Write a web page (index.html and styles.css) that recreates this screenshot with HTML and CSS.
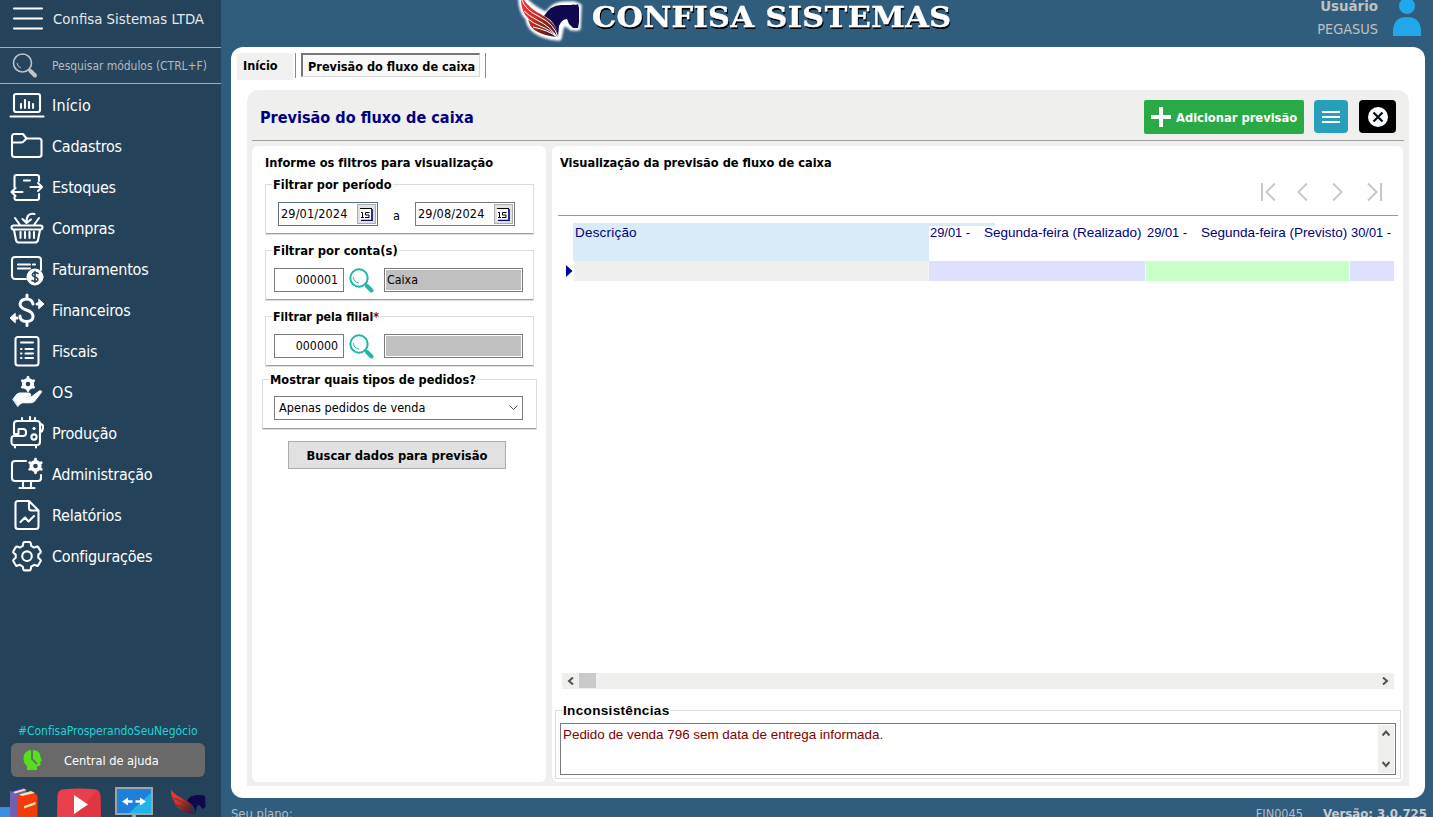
FILE: index.html
```html
<!DOCTYPE html>
<html lang="pt-BR">
<head>
<meta charset="utf-8">
<title>Confisa Sistemas</title>
<link rel="stylesheet" href="styles.css">
</head>
<body>
<div class="app">
  <aside class="sidebar">
    <div class="company">
      <svg class="burger" width="30" height="24" viewBox="0 0 30 24"><path d="M1 1.500h28M1 11.500h28M1 21.500h28"/></svg>
      <span class="company-name">Confisa Sistemas LTDA</span>
    </div>
    <div class="search">
      <svg width="26" height="26" viewBox="0 0 26 26"><circle cx="10.500" cy="10" r="9" fill="none" stroke="#bfc4c8" stroke-width="1.600"/><path d="M5 10a6 6 0 0 0 4 5" fill="none" stroke="#bfc4c8"/><path d="M16.500 16l2 2" stroke="#bfc4c8" stroke-width="2"/><path d="M18.500 18l4.500 4.500" stroke="#bfc4c8" stroke-width="4" stroke-linecap="round"/></svg>
      <span class="search-hint">Pesquisar módulos (CTRL+F)</span>
    </div>
    <nav class="menu">
      <a class="item"><svg class="ico" viewBox="0 0 36 36"><rect x="5" y="7" width="26" height="18" rx="2"/><path d="M1.500 29.500h33M12 21v-4M16 21v-8M20 21v-6M24 21v-4"/></svg><span>Início</span></a>
      <a class="item"><svg class="ico" viewBox="0 0 36 36"><path d="M3 26V8.500A2.500 2.500 0 0 1 5.500 6H14l3.500 4.500H30A2.500 2.500 0 0 1 32.500 13v13.500A2.500 2.500 0 0 1 30 29H5.500A2.500 2.500 0 0 1 3 26.500zM3 14.500h9.500q1.500 0 2.500-1.500l2.500-2.500"/></svg><span>Cadastros</span></a>
      <a class="item"><svg class="ico" viewBox="0 0 36 36"><path d="M5.500 18V8a2 2 0 0 1 2-2H28a2 2 0 0 1 2 2v4M30 25v4a2 2 0 0 1-2 2H7.500a2 2 0 0 1-2-2v-1M15 11.500h6M21.500 18H33M29 14l4 4-4 4M13.500 23H2.500M6.500 19l-4 4 4 4"/></svg><span>Estoques</span></a>
      <a class="item"><svg class="ico" viewBox="0 0 36 36"><path d="M4.500 15.500h27a1.500 1.500 0 0 1 0 4H4.500a1.500 1.500 0 0 1 0-4zM5 20l2 10q.5 2.500 3 2.500h16q2.500 0 3-2.500l2-10M11.500 22v6M16 22v6M20.500 22v6M25 22v6M6 8l5 7M30 8l-5 7M25.500 4q-8-1.500-8 8M13.500 9l4 4 4.500-3.500"/></svg><span>Compras</span></a>
      <a class="item"><svg class="ico" viewBox="0 0 36 36"><path d="M17 28H6a3 3 0 0 1-3-3V9a3 3 0 0 1 3-3h23a3 3 0 0 1 3 3v10M9 13.500h12M24 13.500h2M9 17.500h12"/><circle class="solid" cx="26" cy="26" r="8"/><path class="dark" d="M29 22.500q-3-2-5 0t2 3.500 2.500 3.500-5.500 0M26 20.500v11"/></svg><span>Faturamentos</span></a>
      <a class="item"><svg class="ico" viewBox="0 0 36 36"><path class="thick" d="M24 12q-1-5-6.500-5T11 12q0 4 6.500 6t6.500 6.500q0 5-6.500 5T11 24M18 3v4M18 29.500v4"/><path class="thick" d="M28 12h3"/><path class="solid" d="M30 7.500l5 4.500-5 4.500z"/><path class="thick" d="M5 26h3"/><path class="solid" d="M6 21.500L1 26l5 4.500z"/></svg><span>Financeiros</span></a>
      <a class="item"><svg class="ico" viewBox="0 0 36 36"><rect x="6.500" y="4" width="23" height="28.500" rx="2.500"/><path d="M12 9.500h12M12 16h.5M16.500 16H24M12 20.500h.5M16.500 20.500H24M12 25h.5M16.500 25H24"/></svg><span>Fiscais</span></a>
      <a class="item"><svg class="ico" viewBox="0 0 36 36"><g transform="translate(19 10)"><circle r="4.200" class="ring"/><path class="teeth" d="M0-5V-6.500M0 5V6.500M4.300-2.500L5.600-3.200M4.300 2.500L5.600 3.200M-4.300-2.500L-5.600-3.200M-4.300 2.500L-5.600 3.200"/></g><path class="solid" d="M4 25l4-5q2-1.500 5-1h7q2.500.5 1.500 3l-6 .8q6 1.500 9-1.500l6-4.500q2.500-.5 2 1.500l-7 9q-1.500 1.500-4 1.500h-8q-2 0-4.500 3.500z"/></svg><span>OS</span></a>
      <a class="item"><svg class="ico" viewBox="0 0 36 36"><path d="M5 19V9q0-3 3-3h20q3 0 3 3v18q0 3-3 3H5q-2.500 0-2.500-3v-3q0-3 2.500-3h9q3 0 3-3v-1q0-3-3-3H9.500v5H5M13 6V3M21 6V2M26 6V3M31 9q3.500 0 3 4t-3 4M6 31v1.500M27 31v1.500"/><circle cx="25" cy="22" r="2.600"/><circle class="solid" cx="25" cy="13.500" r="1.200"/></svg><span>Produção</span></a>
      <a class="item"><svg class="ico" viewBox="0 0 36 36"><path d="M17 5H6Q3 5 3 8v14q0 3 3 3h23q3 0 3-3v-3M14 25v6M22 25v6M10.500 32h15"/><g transform="translate(26.500 10)"><circle r="4.200" class="ring"/><path class="teeth" d="M0-5V-6.800M0 5V6.800M4.300-2.500L5.800-3.400M4.300 2.500L5.800 3.400M-4.300-2.500L-5.800-3.400M-4.300 2.500L-5.800 3.400"/></g></svg><span>Administração</span></a>
      <a class="item"><svg class="ico" viewBox="0 0 36 36"><path d="M20 4H9Q6.500 4 6.500 6.500v23Q6.500 32 9 32h18q2.500 0 2.500-2.500V13.500zM20 4v7q0 2.500 2.500 2.500h7M11.500 25l4.500-4.500 3.500 4 5.500-5.500"/></svg><span>Relatórios</span></a>
      <a class="item"><svg class="ico" viewBox="0 0 36 36"><path d="M15.300 4h5.400q.8 0 1 1l.5 2.800 3 1.800 2.800-1q.8-.3 1.200.5l2.500 4.300q.4.800-.2 1.300L29.300 16.600v3.200l2.200 1.900q.6.500.2 1.300l-2.500 4.300q-.4.800-1.200.5l-2.800-1-3 1.800-.5 2.800q-.2 1-1 1h-5.400q-.8 0-1-1l-.5-2.800-3-1.800-2.800 1q-.8.300-1.200-.5L4.300 23q-.4-.8.200-1.300l2.200-1.900v-3.200L4.500 14.700q-.6-.5-.2-1.300l2.500-4.300q.4-.8 1.200-.5l2.800 1 3-1.800.5-2.800q.2-1 1-1z"/><circle cx="18" cy="18.200" r="4.800"/></svg><span>Configurações</span></a>
    </nav>
    <div class="hashtag">#ConfisaProsperandoSeuNegócio</div>
    <button class="help">
      <svg width="20" height="22" viewBox="0 0 20 22"><path fill="#55e01c" d="M4 21v-4Q.5 14.500.5 9.500.5 1 9.500 1 17 1 17.500 8l1.500 4h-1.500v3.500q0 1.500-3.500 1.500v4z"/><path d="M9 1v9l5 5" fill="none" stroke="#696969" stroke-width="1.800"/></svg>
      <span>Central de ajuda</span>
    </button>
    <div class="shortcuts">
      <svg class="sc-books" width="38" height="31" viewBox="0 0 38 31"><path fill="#3b8be0" d="M0 20h10v11H0z"/><path fill="#7060b0" d="M10 4l14-3 2 3v27H10z"/><path fill="#203c90" d="M10 3l10-2.500h5L12 5z"/><path fill="#f4e3b0" d="M13 5l11-3 3 1-12 3.500z"/><path fill="#f53b0c" d="M17 8.500L32 4.500l5.500 4V31H17z"/><path fill="#f4e3b0" d="M19 7.500l12-3.500 4 2-13 3zM24 19l11.500-4v2.500L24 21.500z"/></svg>
      <svg class="sc-video" width="44" height="29" viewBox="0 0 44 29"><path fill="#e8404e" d="M5 1.500Q22-.5 39 1.500q4 1 4.500 6L44 29H0L.5 7.500Q1 2.500 5 1.500z"/><path fill="#d62838" d="M40 2q3 1 3.500 6L44 29H16z" opacity=".45"/><path fill="#fff" d="M17 7v19l14-9.500z"/></svg>
      <svg class="sc-remote" width="38" height="30" viewBox="0 0 38 30"><path fill="#9ca3aa" d="M0 0h38v28H0zM17 27h4v3h-4z"/><path fill="#1f80dc" d="M2 2h34v24H2z"/><path fill="#1fb5e8" d="M36 6v20H14z"/><path fill="#fff" d="M7 14.500l6-4v2.800h4.500v2.400H13v2.800zM31 14.500l-6-4v2.800h-4.500v2.400H25v2.800z"/></svg>
      <svg class="sc-horse" width="35" height="25" viewBox="0 0 35 25"><path fill="url(#wing)" d="M0 0q0 7 3 11 2 6 7 9 5 3 14 4Q23 14 13 9 4 5 0 0z"/><path fill="#10084e" d="M16 11q2-6 11-6 6 0 7 1l.5 11-3 2-3-4q-4 0-3.500 9-1-9-9-13z"/><path d="M2 8q16 5 21 16M5 15q12 3 17 8M2 2q16 8 22 21" fill="none" stroke="#24425a" stroke-width=".8"/></svg>
    </div>
  </aside>

  <div class="main">
    <header class="topbar">
      <div class="brand">
        <svg class="brand-logo" width="71" height="46" viewBox="0 0 71 46">
          <defs>
            <linearGradient id="wing" x1="0" y1="0" x2="1" y2="1"><stop offset="0" stop-color="#f8383c"/><stop offset=".4" stop-color="#d83028"/><stop offset=".65" stop-color="#8c2818"/><stop offset="1" stop-color="#350a40"/></linearGradient>
            <filter id="halo" x="-20%" y="-20%" width="140%" height="140%"><feGaussianBlur stdDeviation="1.300"/></filter>
          </defs>
          <g filter="url(#halo)" fill="#fff" stroke="#fff" stroke-width="5.500" stroke-linejoin="round"><path d="M7-6q-1 17 7 24 1 9 8 13 8 6 23 7l2-10 3-6 8 6h6l1-22-5-2H52q-13 0-19 11Q14 7 7-6z"/></g>
          <path fill="url(#wing)" d="M7-6q-1 17 7 24 1 9 8 13 8 5 22 6Q43 23 28 15 12 7 7-6z"/>
          <path fill="#10084e" d="M30 16Q37 4 49 5h8q3-1 5 0l2-1 1 4v14l-1 6h-5l-4-4-2-5q-5 0-8 7l-1 11Q42 21 30 16z"/>
          <path d="M8 0q3 10 18 17 14 7 18 20M10 11q5 5 13 9 14 7 20 17M14 19q5 4 12 7 11 4 17 11M19 27q15 3 24 10" fill="none" stroke="#fff" stroke-width="1"/>
        </svg>
        <h1 class="brand-name">CONFISA SISTEMAS</h1>
      </div>
      <div class="user">
        <div class="user-text"><b>Usuário</b><span>PEGASUS</span></div>
        <svg width="28" height="40" viewBox="0 0 28 40"><circle cx="14" cy="9" r="8" fill="#22a8ea"/><path fill="#22a8ea" d="M0 39V33q1-13 14-13t14 13v6z"/></svg>
      </div>
    </header>

    <section class="window">
      <div class="tabs">
        <span class="tab"><b>Início</b></span>
        <i class="tab-rule"></i>
        <span class="tab active"><b>Previsão do fluxo de caixa</b></span>
        <i class="tab-rule end"></i>
      </div>

      <div class="sheet">
        <div class="sheet-head">
          <h2 class="sheet-title">Previsão do fluxo de caixa</h2>
          <button class="btn-add"><svg width="20" height="20" viewBox="0 0 20 20"><path d="M10 0v20M0 10h20" stroke="#fff" stroke-width="4"/></svg><b>Adicionar previsão</b></button>
          <button class="btn-menu"><svg width="18" height="12" viewBox="0 0 18 12"><path d="M0 1h18M0 6h18M0 11h18" stroke="#fff" stroke-width="2"/></svg></button>
          <button class="btn-close"><svg width="20" height="20" viewBox="0 0 20 20"><circle cx="10" cy="10" r="10" fill="#fff"/><path d="M5.500 5.500l9 9M14.500 5.500l-9 9" stroke="#000c14" stroke-width="2.200"/></svg></button>
        </div>

        <div class="cols">
          <form class="card filters">
            <h3 class="h3">Informe os filtros para visualização</h3>
            <div class="group">
              <b class="legend">Filtrar por período</b>
              <span class="date focus"><span>29/01/2024</span><i class="cal"><svg width="13" height="13" viewBox="0 0 13 13"><path fill="#fff" d="M0 1h11v11H0z"/><path d="M0 .5h12" stroke="#000"/><path d="M12 1v11.500H1" fill="none" stroke="#000080" stroke-width="1.600"/><path d="M1 4.500h1.500V9M1 9.500h3M9.500 4.500h-4V7h3.500v2.500H5" fill="none" stroke="#000"/></svg></i></span>
              <span class="to">a</span>
              <span class="date"><span>29/08/2024</span><i class="cal"><svg width="13" height="13" viewBox="0 0 13 13"><path fill="#fff" d="M0 1h11v11H0z"/><path d="M0 .5h12" stroke="#000"/><path d="M12 1v11.500H1" fill="none" stroke="#000080" stroke-width="1.600"/><path d="M1 4.500h1.500V9M1 9.500h3M9.500 4.500h-4V7h3.500v2.500H5" fill="none" stroke="#000"/></svg></i></span>
            </div>
            <div class="group lookup">
              <b class="legend wide">Filtrar por conta(s)</b>
              <span class="code">000001</span>
              <svg class="lens" width="26" height="26" viewBox="0 0 26 26"><circle cx="10" cy="10" r="8.700"/><path d="M4.500 9.500a6 6 0 0 0 5 5.500" stroke-width="1"/><path d="M16 16l2 2"/><path d="M18 18l4.500 4.500" stroke-width="4"/></svg>
              <span class="readonly">Caixa</span>
            </div>
            <div class="group lookup">
              <b class="legend tight">Filtrar pela filial<em>*</em></b>
              <span class="code">000000</span>
              <svg class="lens" width="26" height="26" viewBox="0 0 26 26"><circle cx="10" cy="10" r="8.700"/><path d="M4.500 9.500a6 6 0 0 0 5 5.500" stroke-width="1"/><path d="M16 16l2 2"/><path d="M18 18l4.500 4.500" stroke-width="4"/></svg>
              <span class="readonly"></span>
            </div>
            <div class="group orders">
              <b class="legend">Mostrar quais tipos de pedidos?</b>
              <span class="combo"><span>Apenas pedidos de venda</span><svg width="9" height="6" viewBox="0 0 9 6"><path d="M.5.500l4 4 4-4" fill="none" stroke="#555"/></svg></span>
            </div>
            <button type="button" class="btn-fetch"><b>Buscar dados para previsão</b></button>
          </form>

          <div class="card view">
            <h3 class="h3">Visualização da previsão de fluxo de caixa</h3>
            <div class="pager">
              <svg width="15" height="20" viewBox="0 0 15 20"><path d="M1 1v18M14 1.500L5.500 10l8.500 8.500"/></svg>
              <svg width="11" height="20" viewBox="0 0 11 20"><path d="M10 1.500L1.500 10l8.500 8.500"/></svg>
              <svg width="11" height="20" viewBox="0 0 11 20"><path d="M1 1.500L9.500 10 1 18.500"/></svg>
              <svg width="15" height="20" viewBox="0 0 15 20"><path d="M14 1v18M1 1.500L9.500 10 1 18.500"/></svg>
            </div>
            <div class="grid">
              <div class="grid-head">
                <span class="c-desc">Descrição</span>
                <span class="c-real"><span class="date-label">29/01 -</span><span>Segunda-feira (Realizado)</span></span>
                <span class="c-prev"><span class="date-label">29/01 -</span><span>Segunda-feira (Previsto)</span></span>
                <span class="c-next"><span class="date-label">30/01 -</span></span>
              </div>
              <div class="grid-row">
                <svg class="pointer" width="7" height="12" viewBox="0 0 7 12"><path fill="#0000a8" d="M0 0l6.500 6L0 12z"/></svg>
                <i class="c-desc"></i><i class="c-real"></i><i class="c-prev"></i><i class="c-next"></i>
              </div>
            </div>
            <div class="hscroll">
              <svg width="7" height="8" viewBox="0 0 7 8"><path d="M6 .5L2 4l4 3.500"/></svg><i class="thumb"></i>
              <svg class="right" width="7" height="8" viewBox="0 0 7 8"><path d="M1 .5L5 4 1 7.500"/></svg>
            </div>
            <div class="issues">
              <b class="legend">Inconsistências</b>
              <div class="memo">
                <span>Pedido de venda 796 sem data de entrega informada.</span>
                <div class="vscroll">
                  <svg width="8" height="7" viewBox="0 0 8 7"><path d="M.5 5.500L4 1.500l3.500 4"/></svg>
                  <svg width="8" height="7" viewBox="0 0 8 7"><path d="M.5 1L4 5l3.500-4"/></svg>
                </div>
              </div>
            </div>
          </div>
        </div>
      </div>
    </section>

    <footer class="status">
      <span>Seu plano:</span>
      <span class="form-id">FIN0045</span>
      <b>Versão: 3.0.725</b>
    </footer>
  </div>
</div>
</body>
</html>
```
FILE: styles.css
```css
* { box-sizing: border-box; }
html, body { margin: 0; height: 100%; overflow: hidden; }
body { font: 12.6px "DejaVu Sans Condensed", "DejaVu Sans", sans-serif; font-stretch: condensed; color: #000; background: #305c7e; }
h1, h2, h3 { margin: 0; font-weight: bold; }
button { font: inherit; font-stretch: condensed; border: 0; padding: 0; }
span, b, h1, h2, h3 { white-space: nowrap; }
svg { display: block; flex: none; }
i, em { font-style: normal; }

.app { display: flex; height: 817px; overflow: hidden; }

.sidebar { width: 221px; flex: none; background: #24425a; color: #fff; display: flex; flex-direction: column; }
.company { height: 47px; display: flex; align-items: flex-start; padding: 7px 0 0 13px; }
.burger { stroke: #fff; stroke-width: 2; stroke-linecap: round; fill: none; }
.company-name { margin-left: 10px; font-size: 14.8px; line-height: 23px; color: #e4eaee; }
.search { height: 37px; border-top: 1px solid #a3adb4; border-bottom: 1px solid #a3adb4; background: #26445c; display: flex; align-items: center; padding-left: 12px; color: #b4babf; }
.search-hint { margin-left: 14px; font-size: 12px; letter-spacing: -.04px; }
.menu { display: flex; flex-direction: column; }
.item { height: 41px; display: flex; align-items: center; padding-left: 9px; font-size: 16px; letter-spacing: -.22px; }
.item:first-child { letter-spacing: .15px; }
.item:nth-child(8) { letter-spacing: .3px; }
.item span { margin-left: 7px; padding-top: 1px; }
.ico { width: 36px; height: 36px; fill: none; stroke: #fff; stroke-width: 2.1; stroke-linecap: round; stroke-linejoin: round; }
.ico .solid { fill: #fff; stroke-width: 1; }
.ico .dark { stroke: #24425a; stroke-width: 1.6; }
.ico .thick { stroke-width: 3; }
.ico .ring { stroke-width: 3.8; }
.ico .teeth { stroke-width: 2.8; }
.hashtag { margin-top: auto; height: 20px; padding-left: 18px; color: #1ed4d4; font-size: 12px; letter-spacing: -.04px; line-height: 22px; margin-bottom: 3px; }
.help { width: 194px; height: 34px; margin-left: 11px; border-radius: 6px; background: #696969; color: #fff; display: flex; align-items: center; padding-left: 12px; font-size: 12.7px; }
.help span { margin-left: 21px; padding-top: 1px; }
.shortcuts { height: 40px; display: flex; align-items: flex-start; }
.sc-books { margin-top: 10px; }
.sc-video { margin: 11px 0 0 19px; }
.sc-remote { margin: 10px 0 0 14px; }
.sc-horse { margin: 13px 0 0 18px; }

.main { flex: 1; display: flex; flex-direction: column; padding: 0 8px 0 10px; min-width: 0; }
.topbar { height: 47px; display: flex; justify-content: flex-end; flex: none; }
.brand { display: flex; align-items: flex-start; margin-right: 366px; }
.brand-logo { overflow: visible; margin-right: 7px; }
.brand-name { width: 359px; font: bold 27px/36px "DejaVu Serif", serif; letter-spacing: .4px; color: #fff; text-shadow: 1px 2px 0 #000; -webkit-text-stroke: .4px #fff; transform: scaleX(1.122); transform-origin: 0 0; }
.user { display: flex; gap: 15px; color: #c0c0c0; margin-right: 4px; }
.user svg { margin-top: -3px; }
.user-text { width: 61px; display: flex; flex-direction: column; align-items: flex-end; font-size: 14.4px; line-height: 22px; margin-top: -5px; }
.user-text b { font-size: 14.9px; line-height: 23px; }

.window { height: 751px; flex: none; background: #fff; border-radius: 12px; padding: 6px 16px 12px; display: flex; flex-direction: column; }
.tabs { height: 37px; display: flex; margin-left: -10px; }
.tab { width: 56px; height: 27px; background: #f0f0ee; padding-left: 6px; line-height: 26px; }
.tab-rule { width: 1px; height: 25px; background: #8c8c8c; margin-left: 2px; }
.tab.active { width: 179px; height: 24px; margin-left: 5px; padding-left: 5px; line-height: 23px; border: 1px solid #d8d8d8; border-top: 2px solid #777; border-left: 2px solid #777; background: #f8f8f7; }
.tab-rule.end { margin-left: 5px; }

.sheet { width: 1162px; height: 696px; background: #efefee; border-radius: 12px 12px 0 0; padding: 0 5px 4px; display: flex; flex-direction: column; }
.sheet-head { height: 51px; display: flex; align-items: flex-start; padding: 10px 8px 0; border-bottom: 1px solid #9d9d9d; margin-bottom: 5px; }
.sheet-title { font-size: 16.1px; line-height: 35px; color: #000080; margin-right: auto; }
.btn-add { width: 160px; height: 34px; background: #2aaa47; color: #fff; border-radius: 2px; display: flex; align-items: center; padding-left: 7px; gap: 5px; }
.btn-add b { font-size: 12.8px; padding-top: 1px; }
.btn-menu { width: 34px; height: 33px; margin-left: 10px; background: #279fba; border-radius: 4px; display: grid; place-items: center; }
.btn-close { width: 37px; height: 33px; margin-left: 11px; background: #000; border-radius: 4px; display: grid; place-items: center; }

.cols { display: flex; gap: 6px; height: 636px; }
.card { background: #fff; border-radius: 6px; }
.h3 { font-size: 12.7px; line-height: 17px; height: 16px; }

.filters { width: 294px; padding: 8px 9px 0 13px; }
.filters .h3 { letter-spacing: .03px; }
.group { position: relative; width: 269px; height: 51px; margin-top: 14px; border: 1px solid #dcdcdc; box-shadow: inset 0 -1px 0 #a0a0a0; padding: 17px 0 0 12px; display: flex; align-items: flex-start; }
.group + .group { margin-top: 15px; }
.legend { position: absolute; left: 6px; top: -8px; padding: 0 1px; background: #fff; line-height: 16px; font-size: 12.65px; }
.legend.wide { font-size: 12.9px; }
.legend.tight { font-size: 12.3px; }
.legend em { color: #a00000; }
.date { width: 100px; height: 24px; border: 1px solid #7a7a7a; display: flex; align-items: center; justify-content: space-between; padding: 0 1px 0 2px; letter-spacing: .12px; line-height: 20px; }
.date > span { padding-bottom: 1px; }
.date.focus { border-color: #5a7088; }
.cal { width: 19px; height: 20px; background: #e1e1e1; border: 1px solid #adadad; display: grid; place-items: center; }
.to { width: 37px; text-align: center; line-height: 27px; }
.lookup { padding-left: 8px; }
.code { width: 70px; height: 24px; border: 1px solid #7a7a7a; text-align: right; padding-right: 5px; line-height: 22px; font-size: 12.3px; }
.lens { margin: 0 9px 0 5px; fill: none; stroke: #1fb5a8; stroke-width: 2; stroke-linecap: round; }
.readonly { width: 139px; height: 24px; border: 1px solid #7a7a7a; box-shadow: inset 0 0 0 1px #fff; background: #c0c0c0; padding-left: 2px; line-height: 22px; font-size: 12.3px; }
.group.orders { width: 275px; margin: 12px 0 0 -3px; padding: 16px 0 0 11px; }
.combo { width: 249px; height: 24px; border: 1px solid #7a7a7a; display: flex; align-items: center; justify-content: space-between; padding: 0 4px; }
.combo span { padding-bottom: 2px; }
.btn-fetch { width: 218px; height: 28px; margin: 11px 0 0 23px; padding-top: 1px; background: #e1e1e1; border: 1px solid #adadad; font-size: 12.85px; }

.view { width: 851px; padding: 8px 2px 0 3px; display: flex; flex-direction: column; font-family: "Liberation Sans", Arial, sans-serif; font-stretch: normal; }
.view .h3 { margin-left: 5px; font-family: "DejaVu Sans Condensed", "DejaVu Sans", sans-serif; font-stretch: condensed; }
.pager { height: 46px; margin: 0 3px; padding: 12px 16px 0 0; display: flex; justify-content: flex-end; border-bottom: 1px solid #999; }
.pager svg { fill: none; stroke: #c4c8cc; stroke-width: 2; margin-left: 24px; }
.pager svg:first-child + svg { margin-left: 21px; }
.grid { height: 457px; margin: 7px 0 0 11px; color: #000080; font-size: 13.5px; }
.grid-head { display: flex; height: 38px; margin-left: 7px; line-height: 20px; background: linear-gradient(#d9eaf8, #d9eaf8) 0 0 / 422px 3px no-repeat; }
.grid .c-desc { width: 356px; }
.grid .c-real { width: 217px; }
.grid .c-prev { width: 204px; }
.grid .c-next { width: 44px; }
.grid-head > span { padding: 0 0 0 1px; display: flex; }
.grid-head .c-desc { background: #d9eaf8; padding-left: 2px; letter-spacing: .2px; }
.date-label { width: 54px; font-size: 12.9px; }
.grid-row { display: flex; height: 20px; align-items: center; }
.grid-row i { height: 20px; border-right: 1px solid #f4f4f4; }
.grid-row i.c-desc { background: #efefee; border-left: 1px solid #fff; }
.grid-row i.c-real, .grid-row i.c-next { background: #dfe0fe; }
.grid-row i.c-next { border: 0; }
.grid-row i.c-prev { background: #c8ffca; }
.hscroll { width: 832px; height: 16px; margin: -7px 0 0 7px; background: #efefee; display: flex; align-items: center; padding: 0 5px 1px; }
.hscroll svg, .vscroll svg { fill: none; stroke: #555049; stroke-width: 2; }
.thumb { width: 17px; height: 15px; background: #c9cacc; margin-left: 5px; }
.hscroll .right { margin-left: auto; }
.issues { position: relative; width: 846px; height: 69px; margin-top: 21px; border: 1px solid #dcdcdc; padding: 12px 4px 0; font-size: 13.4px; }
.issues .legend { font-size: 13.6px; letter-spacing: .3px; }
.memo { height: 52px; border: 1px solid #7a7a7a; display: flex; justify-content: space-between; color: #800000; line-height: 20px; padding: 1px 1px 1px 2px; }
.vscroll { width: 16px; background: #efefee; display: flex; flex-direction: column; align-items: center; justify-content: space-between; padding: 5px 0; }

.status { display: flex; color: #b4bcc4; line-height: 16px; padding-top: 8px; font-size: 12.9px; white-space: nowrap; }
.status .form-id { margin-left: auto; margin-right: 20px; font-size: 12.6px; }
.status b { margin-right: -2px; color: #c8ccd0; font-size: 13.1px; }
```
